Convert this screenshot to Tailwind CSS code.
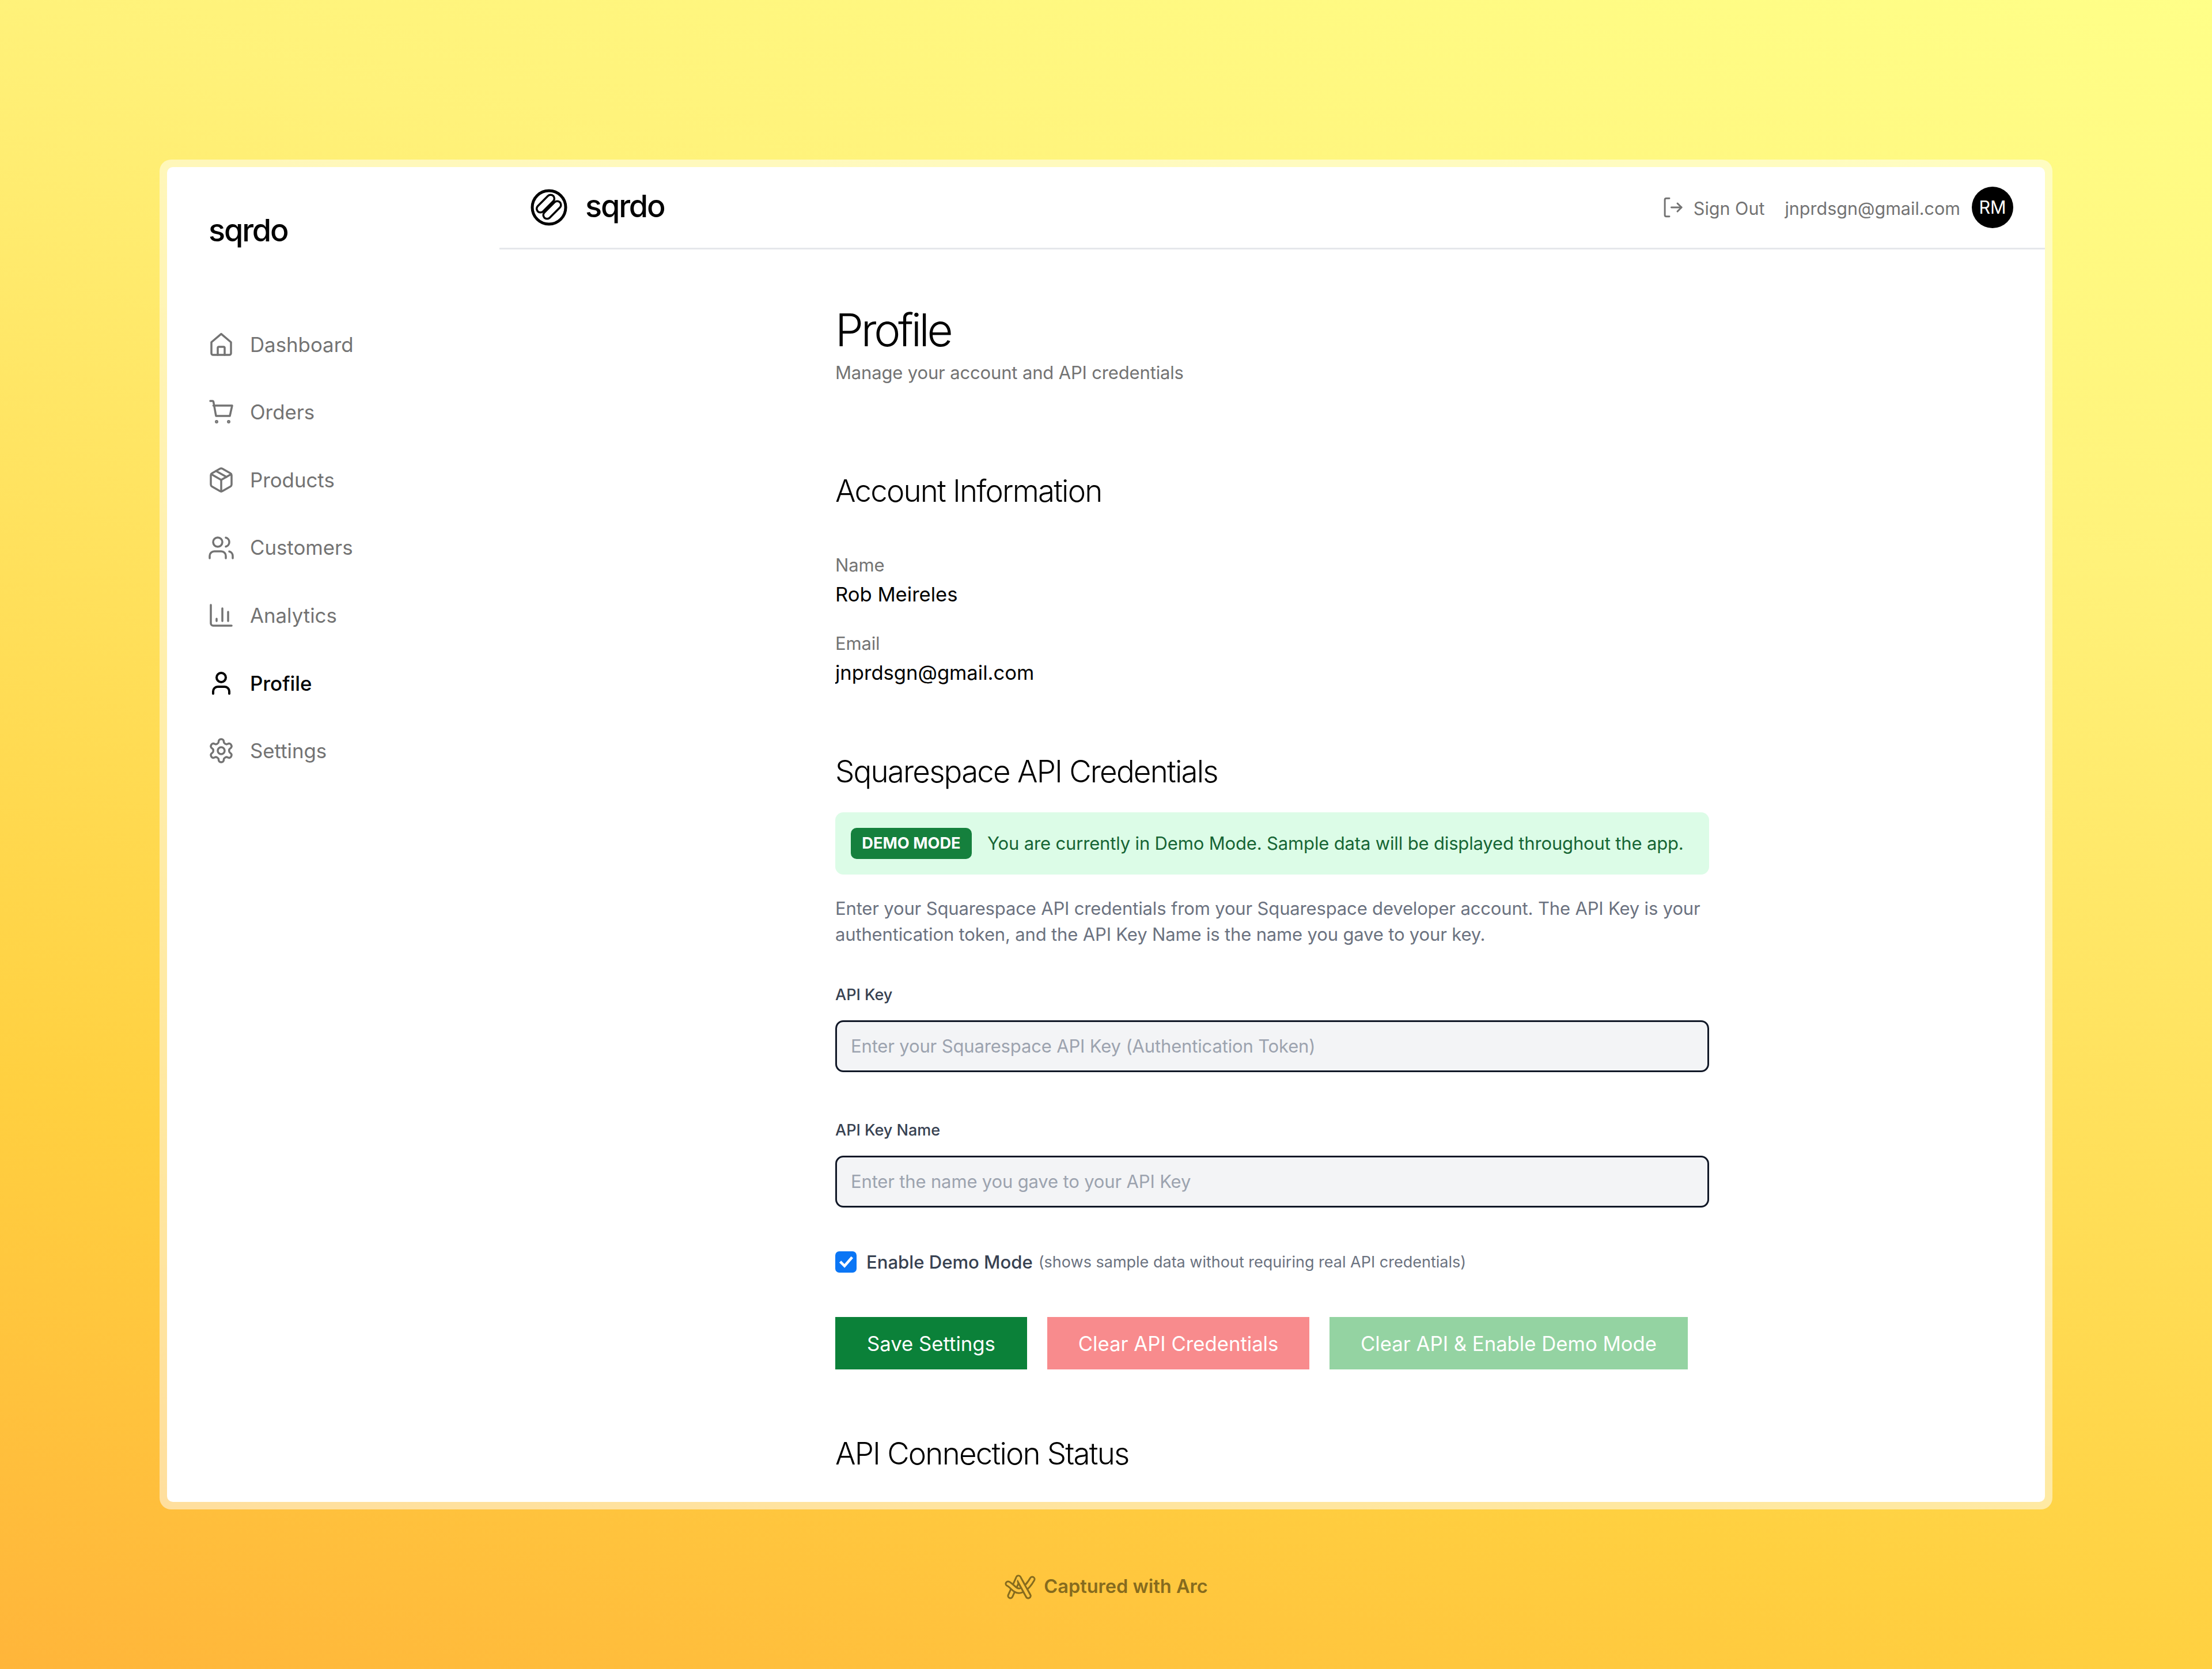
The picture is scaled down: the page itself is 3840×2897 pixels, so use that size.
<!DOCTYPE html>
<html lang="en">
<head>
    <meta charset="UTF-8">
    <meta name="viewport" content="width=device-width, initial-scale=1.0">
    <title>Profile</title>
    <script src="https://cdn.jsdelivr.net/npm/@tailwindcss/browser@4"></script>
</head>
<body class="h-[2897px] w-[3840px] overflow-hidden bg-[linear-gradient(195deg,#ffff88_0%,#fff27a_26%,#ffd040_74%,#ffb53a_100%)] font-['Inter',sans-serif]">
    <div class="mx-[277px] mt-[277px] h-[2343px] rounded-[20px] bg-white/50 p-[13px]">
        <div class="flex h-full overflow-hidden rounded-[10px] bg-white">
            <aside class="w-[577px] shrink-0 px-[72px] pt-[74px]">
                <div class="text-[54px] leading-[72px] font-medium tracking-[-0.04em] text-black">sqrdo</div>
                <nav class="mt-[103px] flex flex-col text-[34.8px] text-[#737373]">
                    <a class="-ml-[2px] flex h-[117.6px] items-center gap-[26px]">
                        <svg class="size-[48px] shrink-0" viewBox="0 0 24 24" fill="none" stroke="currentColor" stroke-width="1.75" stroke-linejoin="round" stroke-linecap="round"><path d="M3.500 10 12 2.800l8.500 7.200v9.600a1.400 1.400 0 0 1-1.400 1.400H4.900a1.400 1.400 0 0 1-1.400-1.400z"/><path d="M9 21v-6a1 1 0 0 1 1-1h4a1 1 0 0 1 1 1v6"/></svg>
                        <span>Dashboard</span>
                    </a>
                    <a class="-ml-[2px] flex h-[117.6px] items-center gap-[26px]">
                        <svg class="size-[48px] shrink-0" viewBox="0 0 24 24" fill="none" stroke="currentColor" stroke-width="1.75" stroke-linejoin="round" stroke-linecap="round"><path d="M2.500 2.500h1.800a1 1 0 0 1 1 .8l2.200 12.200h12L21.500 6.500H5.200"/><circle cx="8" cy="20.500" r=".6"/><circle cx="18.500" cy="20.500" r=".6"/></svg>
                        <span>Orders</span>
                    </a>
                    <a class="-ml-[2px] flex h-[117.6px] items-center gap-[26px]">
                        <svg class="size-[48px] shrink-0" viewBox="0 0 24 24" fill="none" stroke="currentColor" stroke-width="1.75" stroke-linejoin="round" stroke-linecap="round"><path d="M11 21.730a2 2 0 0 0 2 0l7-4A2 2 0 0 0 21 16V8a2 2 0 0 0-1-1.730l-7-4a2 2 0 0 0-2 0l-7 4A2 2 0 0 0 3 8v8a2 2 0 0 0 1 1.730z"/><path d="M12 22V12"/><path d="M3.300 7 12 12l8.700-5"/><path d="m7.500 4.270 9 5.150"/></svg>
                        <span>Products</span>
                    </a>
                    <a class="-ml-[2px] flex h-[117.6px] items-center gap-[26px]">
                        <svg class="size-[48px] shrink-0" viewBox="0 0 24 24" fill="none" stroke="currentColor" stroke-width="1.75" stroke-linejoin="round" stroke-linecap="round"><path d="M16 21v-2a4 4 0 0 0-4-4H6a4 4 0 0 0-4 4v2"/><circle cx="9" cy="7" r="4"/><path d="M22 21v-2a4 4 0 0 0-3-3.870"/><path d="M16 3.130a4 4 0 0 1 0 7.750"/></svg>
                        <span>Customers</span>
                    </a>
                    <a class="-ml-[2px] flex h-[117.6px] items-center gap-[26px]">
                        <svg class="size-[48px] shrink-0" viewBox="0 0 24 24" fill="none" stroke="currentColor" stroke-width="1.75" stroke-linejoin="round" stroke-linecap="round"><path d="M3 3v16a2 2 0 0 0 2 2h16"/><path d="M8 17v-2"/><path d="M13 17V6"/><path d="M18 17V9"/></svg>
                        <span>Analytics</span>
                    </a>
                    <a class="-ml-[2px] flex h-[117.6px] items-center gap-[26px] font-medium text-black">
                        <svg class="size-[48px] shrink-0" viewBox="0 0 24 24" fill="none" stroke="currentColor" stroke-width="2" stroke-linejoin="round" stroke-linecap="round"><path d="M19 21v-2a4 4 0 0 0-4-4H9a4 4 0 0 0-4 4v2"/><circle cx="12" cy="7" r="4"/></svg>
                        <span>Profile</span>
                    </a>
                    <a class="-ml-[2px] flex h-[117.6px] items-center gap-[26px]">
                        <svg class="size-[48px] shrink-0" viewBox="0 0 24 24" fill="none" stroke="currentColor" stroke-width="1.75" stroke-linejoin="round" stroke-linecap="round"><path d="M12.220 2h-.440a2 2 0 0 0-2 2v.180a2 2 0 0 1-1 1.730l-.430.250a2 2 0 0 1-2 0l-.150-.080a2 2 0 0 0-2.730.730l-.220.380a2 2 0 0 0 .730 2.730l.150.100a2 2 0 0 1 1 1.720v.510a2 2 0 0 1-1 1.740l-.150.090a2 2 0 0 0-.730 2.730l.220.380a2 2 0 0 0 2.730.730l.150-.080a2 2 0 0 1 2 0l.430.250a2 2 0 0 1 1 1.730V20a2 2 0 0 0 2 2h.440a2 2 0 0 0 2-2v-.180a2 2 0 0 1 1-1.730l.430-.250a2 2 0 0 1 2 0l.150.080a2 2 0 0 0 2.730-.730l.220-.390a2 2 0 0 0-.730-2.730l-.150-.080a2 2 0 0 1-1-1.740v-.500a2 2 0 0 1 1-1.740l.150-.090a2 2 0 0 0 .730-2.730l-.220-.380a2 2 0 0 0-2.730-.730l-.150.080a2 2 0 0 1-2 0l-.430-.250a2 2 0 0 1-1-1.730V4a2 2 0 0 0-2-2z"/><circle cx="12" cy="12" r="3"/></svg>
                        <span>Settings</span>
                    </a>
                </nav>
            </aside>
            <div class="flex min-w-0 flex-1 flex-col">
                <header class="flex h-[143px] shrink-0 items-center justify-between border-b-[3px] border-[#e5e7eb] pr-[55px] pl-[54px]">
                    <div class="flex items-center gap-[31px]">
                        <svg class="size-[64px]" viewBox="0 0 64 64" fill="none" stroke="#000"><circle cx="32" cy="32" r="29" stroke-width="5"/><rect x="7" y="19" width="38" height="13" rx="6.500" stroke-width="3.500" transform="rotate(-45 26 25.500)"/><rect x="18.500" y="30" width="38" height="13" rx="6.500" stroke-width="3.500" transform="rotate(-45 37.500 36.500)"/></svg>
                        <span class="pb-[5px] text-[54px] leading-none font-medium tracking-[-0.04em] text-black">sqrdo</span>
                    </div>
                    <div class="flex items-center text-[30.5px] text-[#737373]">
                        <svg class="mr-[14px] size-[42px]" viewBox="0 0 24 24" fill="none" stroke="currentColor" stroke-width="1.700" stroke-linejoin="round" stroke-linecap="round"><path d="M8 3H5a1.500 1.500 0 0 0-1.500 1.500v15A1.500 1.500 0 0 0 5 21h3"/><path d="m16 8 4 4-4 4"/><path d="M20 12H10"/></svg>
                        <span class="pt-[3px]">Sign Out</span>
                        <span class="ml-[35px] pt-[3px]">jnprdsgn@gmail.com</span>
                        <span class="ml-[20px] flex size-[72px] items-center justify-center rounded-full bg-black text-white">RM</span>
                    </div>
                </header>
                <main class="mx-auto w-[1517px] flex-1 overflow-hidden pt-[100px]">
                    <h1 class="text-[78px] leading-[80px] font-light tracking-[-0.055em] text-black">Profile</h1>
                    <p class="mt-[10px] text-[31px] leading-[48px] tracking-[-0.005em] text-[#737373]">Manage your account and API credentials</p>

                    <h2 class="mt-[145px] text-[52.8px] leading-[72px] font-light tracking-[-0.034em] text-black">Account Information</h2>
                    <div class="mt-[69px] text-[31px] leading-[48px] tracking-[-0.005em] text-[#737373]">Name</div>
                    <div class="mt-[2px] text-[34.6px] leading-[48px] text-black">Rob Meireles</div>
                    <div class="mt-[38px] text-[31px] leading-[48px] tracking-[-0.005em] text-[#737373]">Email</div>
                    <div class="mt-[2px] text-[34.6px] leading-[48px] text-black">jnprdsgn@gmail.com</div>

                    <h2 class="mt-[112px] text-[52.8px] leading-[72px] font-light tracking-[-0.034em] text-black">Squarespace API Credentials</h2>
                    <div class="mt-[35px] flex h-[108px] items-center gap-[27px] rounded-[14px] bg-[#dcfce7] px-[27px] text-[31px] tracking-[-0.005em] whitespace-nowrap text-[#166534]">
                        <span class="flex h-[54px] w-[210px] shrink-0 items-center justify-center rounded-[10px] bg-[#15803d] text-[27.2px] font-bold tracking-normal text-white">DEMO MODE</span>
                        <span>You are currently in Demo Mode. Sample data will be displayed throughout the app.</span>
                    </div>
                    <p class="mt-[37px] text-[31px] leading-[44.800px] tracking-[-0.005em] text-[#6b7280]">Enter your Squarespace API credentials from your Squarespace developer account. The API Key is your authentication token, and the API Key Name is the name you gave to your key.</p>

                    <label class="mt-[62px] block text-[27px] leading-[40px] font-medium text-[#374151]">API Key</label>
                    <input type="text" class="mt-[24px] block h-[90px] w-full rounded-[14px] border-[3px] border-[#111827] bg-[#f3f4f6] px-[24px] text-[31px] tracking-[-0.005em] placeholder:text-[#9ca3af]" placeholder="Enter your Squarespace API Key (Authentication Token)">

                    <label class="mt-[81px] block text-[27px] leading-[40px] font-medium text-[#374151]">API Key Name</label>
                    <input type="text" class="mt-[24px] block h-[90px] w-full rounded-[14px] border-[3px] border-[#111827] bg-[#f3f4f6] px-[24px] text-[31px] tracking-[-0.005em] placeholder:text-[#9ca3af]" placeholder="Enter the name you gave to your API Key">

                    <div class="mt-[72px] flex items-center">
                        <span class="flex size-[37px] items-center justify-center rounded-[7px] bg-[#0b76f5]">
                            <svg class="size-[28px]" viewBox="0 0 24 24" fill="none" stroke="#fff" stroke-width="4" stroke-linecap="square"><path d="m4.500 12.500 5 5L19.500 6"/></svg>
                        </span>
                        <span class="ml-[17px] text-[31.1px] font-medium text-[#374151]">Enable Demo Mode</span>
                        <span class="ml-[10px] text-[27px] text-[#6b7280]">(shows sample data without requiring real API credentials)</span>
                    </div>

                    <div class="mt-[72px] flex gap-[35px] text-[34.7px] text-white">
                        <button class="flex h-[91px] w-[333px] items-center justify-center bg-[#0b8139]">Save Settings</button>
                        <button class="flex h-[91px] w-[455px] items-center justify-center bg-[#f88b8d]">Clear API Credentials</button>
                        <button class="flex h-[91px] w-[622px] items-center justify-center bg-[#94d3a2]">Clear API &amp; Enable Demo Mode</button>
                    </div>

                    <h2 class="mt-[110px] text-[52.8px] leading-[72px] font-light tracking-[-0.034em] text-black">API Connection Status</h2>
                </main>
            </div>
        </div>
    </div>
    <footer class="mt-[110px] flex items-center justify-center gap-[14px] text-[32.5px] font-semibold text-[#866b1e]">
        <svg class="h-[46px] w-[55px]" viewBox="0 0 55 46" fill="none" stroke-linecap="round" stroke-linejoin="round">
            <path d="M11 39 25 8l17 31" stroke="currentColor" stroke-width="11"/><path d="M11 39 25 8l17 31" stroke="#ffc53f" stroke-width="5"/>
            <path d="M7 18c7 3 12 14 21 12 8-2 16-11 21-20" stroke="currentColor" stroke-width="11"/><path d="M7 18c7 3 12 14 21 12 8-2 16-11 21-20" stroke="#ffc53f" stroke-width="5"/>
            <path d="M28 14 42 39" stroke="currentColor" stroke-width="11"/><path d="M25 8 42 39" stroke="#ffc53f" stroke-width="5"/>
        </svg>
        <span>Captured with Arc</span>
    </footer>
</body>
</html>
